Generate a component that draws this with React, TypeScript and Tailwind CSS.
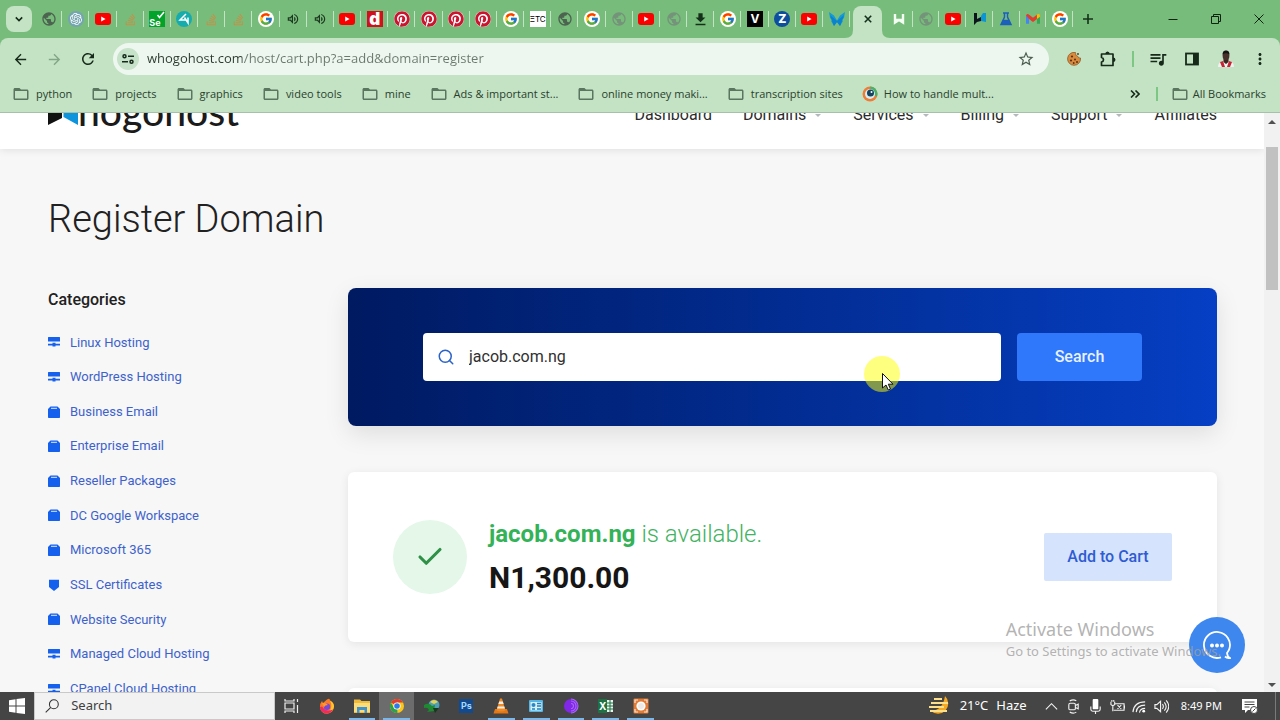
import type { ReactNode } from "react";
import { Check, Search } from "lucide-react";
import { FaPinterest, FaStackOverflow } from "react-icons/fa";
import { FcGoogle } from "react-icons/fc";
import {
  MdArrowBack,
  MdArrowForward,
  MdDownload,
  MdFolderOpen,
  MdMoreVert,
  MdOutlineVolumeUp,
  MdPublic,
  MdQueueMusic,
  MdRefresh,
  MdStarBorder,
} from "react-icons/md";
import { SiOpenai } from "react-icons/si";

const pinnedTabs = [
  "globe", "openai", "youtube", "stack", "selenium", "teal", "stack", "stack", "google", "sound",
  "sound", "youtube", "d", "pinterest", "pinterest", "pinterest", "pinterest", "google", "etc", "globe",
  "google", "globeMuted", "youtube", "globeMuted", "download", "google", "v", "z", "youtube", "wing",
];

const trailingTabs = ["w", "globeMuted", "youtube", "wDark", "flask", "gmail", "google"];

const bookmarks = [
  "python",
  "projects",
  "graphics",
  "video tools",
  "mine",
  "Ads & important st...",
  "online money maki...",
  "transcription sites",
];

const navLinks = [
  { label: "Dashboard", menu: false },
  { label: "Domains", menu: true },
  { label: "Services", menu: true },
  { label: "Billing", menu: true },
  { label: "Support", menu: true },
  { label: "Affiliates", menu: false },
];

const categories = [
  { label: "Linux Hosting", icon: "server" },
  { label: "WordPress Hosting", icon: "server" },
  { label: "Business Email", icon: "box" },
  { label: "Enterprise Email", icon: "box" },
  { label: "Reseller Packages", icon: "box" },
  { label: "DC Google Workspace", icon: "box" },
  { label: "Microsoft 365", icon: "box" },
  { label: "SSL Certificates", icon: "shield" },
  { label: "Website Security", icon: "box" },
  { label: "Managed Cloud Hosting", icon: "server" },
  { label: "CPanel Cloud Hosting", icon: "server" },
];

const favicons: Record<string, ReactNode> = {
  globe: <MdPublic className="size-4 text-[#4c6350]" />,
  globeMuted: <MdPublic className="size-4 text-[#74937a]" />,
  openai: (
    <span className="flex size-4 items-center justify-center rounded-full bg-[#74a5b0]">
      <SiOpenai className="size-3 text-white" />
    </span>
  ),
  youtube: (
    <svg viewBox="0 0 16 12" className="h-3 w-4">
      <rect width="16" height="12" rx="3" fill="#fb0000" />
      <path d="M6.2 3.5v5L10.6 6z" fill="#fff" />
    </svg>
  ),
  stack: <FaStackOverflow className="size-[13px] text-[#c0924a]" />,
  selenium: (
    <span className="relative flex size-4 items-end bg-[#02a32b] font-[Inter,sans-serif] text-[9px] leading-[9px] font-bold text-white">
      Se
      <svg viewBox="0 0 16 16" className="absolute inset-0">
        <path d="M8.5 4l2 2.5L15 1" fill="none" stroke="#fff" strokeWidth="1.6" />
      </svg>
    </span>
  ),
  teal: (
    <svg viewBox="0 0 16 16" className="size-4">
      <circle cx="8" cy="8" r="8" fill="#16acae" />
      <path d="M10 3L4 9h6M8.500 6.500L12 12V6.500" fill="none" stroke="#fff" strokeWidth="1.500" />
    </svg>
  ),
  google: (
    <span className="flex size-4 items-center justify-center rounded-full bg-white">
      <FcGoogle className="size-[14px]" />
    </span>
  ),
  sound: <MdOutlineVolumeUp className="size-[14px] text-[#1c3820]" />,
  d: (
    <span className="flex size-4 items-center justify-center bg-[#d40f1b] font-[Inter,sans-serif] text-[17px] leading-4 font-black text-white">
      d
    </span>
  ),
  pinterest: (
    <span className="rounded-full bg-white">
      <FaPinterest className="size-4 text-[#cb1430]" />
    </span>
  ),
  etc: (
    <span className="flex size-4 items-center justify-center bg-white font-[Inter,sans-serif] text-[8px] text-black">
      ΞTC
    </span>
  ),
  download: <MdDownload className="size-[17px] text-[#14301a]" />,
  v: (
    <span className="flex size-4 items-center justify-center bg-black font-[Inter,sans-serif] text-[12px] font-bold text-white">
      V
    </span>
  ),
  z: (
    <span className="flex size-4 items-center justify-center rounded-full bg-[#0d4e9e] font-[Inter,sans-serif] text-[12px] font-extrabold text-white">
      Z
    </span>
  ),
  wing: (
    <svg viewBox="0 0 16 16" className="size-4">
      <path d="M0 1l5 3.500 3 5 3-5L16 1l-1 6-2 2 1 1-3 5-3-4-3 4-3-5 1-1-2-2z" fill="#149bd7" />
      <path d="M1 4l7 6 7-6-2 6-2 5-3-4-3 4-2-5z" fill="#0b82cc" />
    </svg>
  ),
  w: (
    <svg viewBox="0 0 16 16" className="size-4">
      <path d="M4 3v8.500L8 9l4 2.500V3M4 9h8" fill="none" stroke="#f4fff4" strokeWidth="2.400" />
    </svg>
  ),
  wDark: (
    <svg viewBox="0 0 16 16" className="size-4">
      <path d="M2 2h3v6l4-2v4l-4 1-3 3z" fill="#0c151c" />
      <path d="M9 10V5l2-3h3v9z" fill="#0b95d5" />
    </svg>
  ),
  flask: (
    <svg viewBox="0 0 16 16" className="size-4" fill="none" stroke="#1d60bb" strokeWidth="1.500">
      <path d="M5 2h6M6.500 2v4L3 13.500h10L9.500 6V2" />
      <path d="M5.500 9.500h5l1.500 3.500H4z" fill="#1d60bb" />
    </svg>
  ),
  gmail: (
    <svg viewBox="0 0 16 12" className="h-3 w-[14px]">
      <path d="M0 2v9.500h3.500V5z" fill="#4285f4" />
      <path d="M16 2v9.500h-3.500V5z" fill="#34a853" />
      <path d="M0 2Q1.500-.8 3.500 1L8 4.500 12.500 1v5L8 9.500 3.500 6z" fill="#e33b2e" />
      <path d="M12.500 1Q15-.8 16 2v1.500L12.500 6z" fill="#fbbc04" />
    </svg>
  ),
};

function Tab({ icon }: { icon: string }) {
  return (
    <button type="button" aria-label={icon} className="relative flex h-full flex-1 items-center justify-center">
      {favicons[icon]}
      <span className="absolute top-[11px] right-0 h-4 w-px bg-[#c3e3c4]" />
    </button>
  );
}

function TabStrip() {
  return (
    <div className="flex h-[38px] items-center">
      <button type="button" aria-label="Search tabs" className="ml-[6px] flex size-[26px] items-center justify-center rounded-lg bg-[#c3e3c4]">
        <svg viewBox="0 0 10 10" className="size-2" fill="none" stroke="#162b19" strokeWidth="2">
          <path d="M1 3l4 4 4-4" />
        </svg>
      </button>
      <div className="ml-[3px] flex h-full w-[815px]">
        {pinnedTabs.map((icon, i) => (
          <Tab key={i} icon={icon} />
        ))}
      </div>
      <button type="button" aria-label="Close tab" className="relative ml-[3px] flex h-8 w-[29px] items-center justify-center self-end rounded-t-lg bg-[#c3e3c4] pb-[6px]">
        <svg viewBox="0 0 8 8" className="size-2" stroke="#14301a" strokeWidth="1.600">
          <path d="M.8.8l6.400 6.400M7.200.8L.8 7.200" />
        </svg>
        <svg viewBox="0 0 8 8" className="absolute bottom-0 -left-2 size-2" fill="#c3e3c4">
          <path d="M8 0v8H0q8 0 8-8z" />
        </svg>
        <svg viewBox="0 0 8 8" className="absolute -right-2 bottom-0 size-2" fill="#c3e3c4">
          <path d="M0 0v8h8q-8 0-8-8z" />
        </svg>
      </button>
      <div className="ml-[4px] flex h-full w-[187px]">
        {trailingTabs.map((icon, i) => (
          <Tab key={i} icon={icon} />
        ))}
      </div>
      <button type="button" aria-label="New tab" className="flex h-full w-[30px] items-center justify-center">
        <svg viewBox="0 0 10 10" className="size-[10px]" stroke="#14301a" strokeWidth="1.600">
          <path d="M5 0v10M0 5h10" />
        </svg>
      </button>
      <div className="ml-auto flex h-full">
        {["Minimize", "Restore", "Close"].map((label) => (
          <button key={label} type="button" aria-label={label} className="flex w-[43px] items-center justify-center">
            <svg viewBox="0 0 10 10" className="size-[10px]" fill="none" stroke="#0f2412">
              {label === "Minimize" && <path d="M.5 5.500h9" />}
              {label === "Restore" && <path d="M.5 2.500h7v7h-7zM2.500 2.500v-2h7v7h-2" />}
              {label === "Close" && <path d="M.5.5l9 9M9.500.5l-9 9" />}
            </svg>
          </button>
        ))}
      </div>
    </div>
  );
}

function ToolButton({ label, children }: { label: string; children: ReactNode }) {
  return (
    <button type="button" aria-label={label} className="flex h-8 w-[34px] shrink-0 items-center justify-center text-[#172a1a]">
      {children}
    </button>
  );
}

function Toolbar() {
  return (
    <div className="flex h-[42px] items-center rounded-t-lg bg-[#c3e3c4] px-[3px]">
      <ToolButton label="Back"><MdArrowBack className="size-[17px]" /></ToolButton>
      <ToolButton label="Forward"><MdArrowForward className="size-[17px] text-[#84a688]" /></ToolButton>
      <ToolButton label="Reload"><MdRefresh className="size-[18px]" /></ToolButton>
      <div className="mx-2 flex h-8 min-w-0 flex-1 items-center rounded-full bg-[#edf7ef] pr-[14px] pl-[4px]">
        <span className="flex size-[22px] items-center justify-center rounded-full bg-[#c6e2c8]">
          <svg viewBox="0 0 12 10" className="h-[10px] w-3" fill="none" stroke="#15291a" strokeWidth="1.500">
            <circle cx="2.500" cy="2.300" r="1.500" />
            <path d="M6 2.300h6M0 7.700h6" />
            <circle cx="9.500" cy="7.700" r="1.500" />
          </svg>
        </span>
        <input
          aria-label="Address"
          defaultValue="whogohost.com/host/cart.php?a=add&domain=register"
          className="ml-2 min-w-0 flex-1 bg-[linear-gradient(90deg,#2c3b2f_95px,#6a786d_95px)] bg-clip-text font-['Open_Sans',sans-serif] text-[13px] text-transparent outline-none"
        />
        <MdStarBorder className="size-[18px] text-[#4b5d4e]" />
      </div>
      <ToolButton label="Cookies">
        <svg viewBox="0 0 14 14" className="size-[14px]">
          <path d="M8.500.5A6.500 6.500 0 1 0 13.500 6q-2 .6-2.500-1.500Q8 4 8.500.5z" fill="#d98a3d" stroke="#83501f" strokeWidth=".7" />
          <g fill="#5a3013">
            <circle cx="5" cy="4.500" r="1.100" />
            <circle cx="4" cy="8.500" r="1.100" />
            <circle cx="8" cy="7.500" r="1" />
            <circle cx="10" cy="10" r="1" />
            <circle cx="6.700" cy="11" r=".9" />
            <circle cx="11" cy="2" r=".9" />
          </g>
        </svg>
      </ToolButton>
      <ToolButton label="Extensions">
        <svg viewBox="0 0 18 18" className="size-[18px]">
          <path
            d="M2.500 4h11.500v11.500H2.500v-3.500q2-.4 2-2.200t-2-2.300z"
            fill="none"
            stroke="#172a1a"
            strokeWidth="1.700"
            strokeLinejoin="round"
          />
          <path d="M6.300 4a2.200 2.500 0 0 1 4.400 0zM14 7.500a2.500 2.200 0 0 1 0 4.400z" fill="#172a1a" />
        </svg>
      </ToolButton>
      <span className="mx-[7px] h-4 w-[2px] bg-[#7cc783]" />
      <ToolButton label="Media"><MdQueueMusic className="size-5" /></ToolButton>
      <ToolButton label="Side panel">
        <svg viewBox="0 0 14 14" className="size-[14px]">
          <rect x="1" y="1.500" width="12" height="11" fill="none" stroke="#172a1a" strokeWidth="1.800" />
          <path d="M8 1h5v12H8z" fill="#172a1a" />
        </svg>
      </ToolButton>
      <ToolButton label="Profile">
        <svg viewBox="0 0 18 18" className="size-[18px]">
          <path d="M1 17q0-5 5-6l3 3 3-3q5 1 5 6z" fill="#eef3f0" />
          <path d="M3 12l3-1 2 6H5zM15 12l-3-1-2 6h3z" fill="#c92236" />
          <path d="M6.500 9h5v3L9 14l-2.500-2z" fill="#3a2420" />
          <ellipse cx="9" cy="5.500" rx="3.400" ry="4.700" fill="#49302a" />
          <path d="M5.600 4.500Q5.500.5 9 .5t3.400 4Q9 2 5.600 4.500z" fill="#171312" />
        </svg>
      </ToolButton>
      <ToolButton label="Menu"><MdMoreVert className="size-[18px]" /></ToolButton>
    </div>
  );
}

function BookmarksBar() {
  return (
    <nav className="flex h-[33px] items-center border-b border-[#a5c1a7] bg-[#c3e3c4] pr-[14px] pb-1 pl-3 font-['Open_Sans',sans-serif] text-[11px] whitespace-nowrap text-[#2a3f2d]">
      <div className="flex min-w-0 flex-1 gap-[19px]">
        {bookmarks.map((label) => (
          <a key={label} href="#" className="flex items-center gap-[6px]">
            <MdFolderOpen className="size-[18px] text-[#5b765f]" />
            {label}
          </a>
        ))}
        <a href="#" className="flex items-center gap-[6px]">
          <svg viewBox="0 0 16 16" className="size-4">
            <circle cx="8" cy="8" r="7.500" fill="#ed7d37" />
            <path d="M8 .5a7.500 7.500 0 0 1 7 10l-5-2z" fill="#48b26b" />
            <circle cx="8" cy="8" r="5" fill="#d7eef3" />
            <circle cx="8.500" cy="7" r="3.500" fill="#17435f" />
            <circle cx="9.500" cy="6" r="1" fill="#fff" />
          </svg>
          How to handle mult...
        </a>
      </div>
      <button type="button" aria-label="More bookmarks">
        <svg viewBox="0 0 10 8" className="h-2 w-[10px]" fill="none" stroke="#172a1a" strokeWidth="1.600">
          <path d="M1 .5L4.500 4 1 7.500M5.500.5L9 4 5.500 7.500" />
        </svg>
      </button>
      <span className="mr-[13px] ml-4 h-[14px] w-[2px] bg-[#7cc783]" />
      <a href="#" className="flex items-center gap-1">
        <MdFolderOpen className="size-[18px] text-[#5b765f]" />
        All Bookmarks
      </a>
    </nav>
  );
}

function CategoryIcon({ icon }: { icon: string }) {
  return (
    <svg viewBox="0 0 12 12" className="size-3 shrink-0" fill="#1660ee">
      {icon === "server" && <path d="M.5 1h11q.5 0 .5.500V5.500H0v-4Q0 1 .5 1zM4.500 6.800h3v.9H12v1.800H7.500v1h-3v-1H0V7.700h4.500z" />}
      {icon === "box" && (
        <>
          <path d="M2.500.5h7L12 3v8.300q0 .7-.7.700H.7q-.7 0-.7-.7V3z" />
          <path d="M3 2.300h6" stroke="#dce8fb" strokeWidth="1" />
        </>
      )}
      {icon === "shield" && <path d="M1 .7h10V8L6 12 1 8z" />}
    </svg>
  );
}

function SiteHeader() {
  return (
    <header className="relative -mt-8 flex h-[68px] items-center justify-between bg-white pr-[47px] pl-12 shadow-[0_1px_8px_rgba(0,0,0,0.10)]">
      <a href="#" aria-label="Whogohost" className="flex items-center pb-2">
        <svg viewBox="0 0 30 36" className="h-9 w-[30px]">
          <path d="M0 4v28l14-7V11z" fill="#111" />
          <path d="M15.500 11v13L30 32V4z" fill="#0d94dc" />
        </svg>
        <span className="font-[Lato,sans-serif] text-[39px] leading-10 font-medium text-[#1b1b1b]">hogohost</span>
      </a>
      <nav className="flex items-center gap-[31px]">
        {navLinks.map((link) => (
          <a key={link.label} href="#" className="flex items-center gap-2 text-[16px] leading-6 text-[#2b2b2b]">
            {link.label}
            {link.menu && (
              <svg viewBox="0 0 8 5" className="h-[5px] w-2" fill="#b5b8bb">
                <path d="M1 1h6L4 4z" />
              </svg>
            )}
          </a>
        ))}
      </nav>
    </header>
  );
}

function DomainPage() {
  return (
    <div className="min-w-0 flex-1 overflow-hidden bg-[#f7f7f7] font-[Roboto,sans-serif]">
      <SiteHeader />
      <main className="pt-[46px] pr-[47px] pl-12">
        <h1 className="text-[38px] leading-[48px] font-light text-[#212121]">Register Domain</h1>
        <div className="mt-[45px] flex">
          <aside className="w-[300px] shrink-0">
            <h2 className="text-[16px] leading-6 font-medium text-[#212121]">Categories</h2>
            <ul className="mt-[13px] grid h-[381px] auto-rows-fr">
              {categories.map((category) => (
                <li key={category.label} className="flex items-center">
                  <a href="#" className="flex items-center gap-[10px] text-[13px] text-[#3d62cc]">
                    <CategoryIcon icon={category.icon} />
                    {category.label}
                  </a>
                </li>
              ))}
            </ul>
          </aside>

          <div className="min-w-0 flex-1 space-y-[46px]">
            <form
              onSubmit={(e) => e.preventDefault()}
              className="flex gap-4 rounded-lg bg-linear-to-r from-[#001a61] to-[#063fc4] px-[75px] py-[45px] shadow-[0_8px_24px_rgba(0,0,0,0.10)]"
            >
              <label className="flex h-12 min-w-0 flex-1 items-center gap-[14px] rounded-sm bg-white px-[14px]">
                <Search className="size-[18px] shrink-0 text-[#2a63c9]" />
                <input
                  type="text"
                  aria-label="Domain name"
                  defaultValue="jacob.com.ng"
                  className="min-w-0 flex-1 text-[16px] text-[#303030] outline-none"
                />
              </label>
              <button type="submit" className="h-12 w-[125px] rounded-sm bg-[#2f77fb] text-[16px] font-medium text-[#e9f2ff]">
                Search
              </button>
            </form>

            <section className="flex items-center rounded-md bg-white px-[45px] py-10 shadow-[0_2px_10px_rgba(0,0,0,0.08)]">
              <span className="flex size-[74px] shrink-0 items-center justify-center rounded-full bg-[#e4f7e9]">
                <Check className="size-[30px] text-[#2f9147]" strokeWidth={2.5} />
              </span>
              <div className="ml-[22px] min-w-0 flex-1 pb-[2px]">
                <p className="text-[24px] leading-[44px] font-light text-[#43b35f]">
                  <strong className="font-bold text-[#34b257]">jacob.com.ng</strong> is available.
                </p>
                <p className="text-[30px] leading-[44px] font-bold text-[#161616]">N1,300.00</p>
              </div>
              <button type="button" className="h-12 w-32 rounded-xs bg-[#d5e3fd] text-[16px] font-medium text-[#2f5bd3]">
                Add to Cart
              </button>
            </section>

            <section className="h-20 rounded-md bg-white shadow-[0_2px_10px_rgba(0,0,0,0.08)]" />
          </div>
        </div>
      </main>
    </div>
  );
}

function Scrollbar() {
  return (
    <div className="flex w-4 flex-col items-center justify-between bg-[#f1f1f1] pt-[7px] pb-[5px]">
      <svg viewBox="0 0 8 4" className="h-1 w-2" fill="#505050"><path d="M4 0l4 4H0z" /></svg>
      <div className="mt-[23px] h-[143px] w-3 bg-[#c1c1c1]" />
      <svg viewBox="0 0 8 4" className="mt-auto h-1 w-2" fill="#505050"><path d="M4 4L0 0h8z" /></svg>
    </div>
  );
}

const taskIcons: { name: string; open: boolean; art: ReactNode }[] = [
  {
    name: "Task view",
    open: false,
    art: <path d="M1 1v2h9V1M1 15v-2h9v2M1 5h9v6H1zM13.500 1v3M13.500 7v8" fill="none" stroke="#eee" strokeWidth="1.200" />,
  },
  {
    name: "Firefox",
    open: false,
    art: (
      <>
        <path d="M8 1.500q3-2 3 1 4 2 4 6A7 7 0 0 1 1 9q0-4 2-6l1 2q2-2 4-3.500z" fill="#ff7a22" />
        <path d="M11 2.500q4 2 4 6-1 5-5 6 4-6 1-12z" fill="#ffc62e" />
        <path d="M1 9q0 5 6 6.500 5 0 7-4-7 3-11-3z" fill="#ee2b63" />
        <circle cx="8" cy="8.700" r="3.200" fill="#7848d6" />
        <path d="M3 5q4-.5 6 2-3 0-4 2z" fill="#ff9b2d" />
      </>
    ),
  },
  {
    name: "File Explorer",
    open: true,
    art: (
      <>
        <path d="M0 1.500h6l1.500 1.500H16v12H0z" fill="#efbb3c" />
        <path d="M0 5h16v9H0z" fill="#fbdc77" />
        <path d="M3 9h10v6h-2.500v-3h-5v3H3z" fill="#3e92cf" />
      </>
    ),
  },
  {
    name: "Chrome",
    open: true,
    art: (
      <>
        <circle cx="8" cy="8" r="7" fill="#fbc618" />
        <path d="M8 8L1.900 4.500A7 7 0 0 1 14.100 4.500H8z" fill="#e43c2e" />
        <path d="M8 8l.5 7A7 7 0 0 1 1.900 4.500L5 10z" fill="#2da24c" />
        <circle cx="8" cy="8" r="3.600" fill="#fff" />
        <circle cx="8" cy="8" r="2.800" fill="#2d7bea" />
      </>
    ),
  },
  {
    name: "Download Manager",
    open: false,
    art: (
      <>
        <circle cx="10" cy="7" r="5.500" fill="#4f9fb6" />
        <path d="M6 4q4-4 8 0l-4 2z" fill="#e6d355" />
        <path d="M0 7q5-3 8 1l3-1-1 6-7 1 2-2q-1-3-5-2z" fill="#1d8a32" />
        <path d="M9 10h6l-4 5z" fill="#16391e" />
      </>
    ),
  },
  { name: "Photoshop", open: false, art: null },
  {
    name: "VLC",
    open: true,
    art: (
      <>
        <path d="M2 11h12l1.500 4.500H.5z" fill="#e57713" />
        <path d="M7 .5h2l3.500 12q-4.500 2-9 0z" fill="#f08a24" />
        <path d="M6.200 3.500h3.600l.8 2.500H5.400zM4.700 8.500h6.600l.6 2H4z" fill="#f5efe8" />
      </>
    ),
  },
  {
    name: "Control Panel",
    open: true,
    art: (
      <>
        <rect x="1" y="2" width="14" height="12" rx="1" fill="#56b6e6" />
        <path d="M2.500 4h11v8.500h-11z" fill="#d7f0fb" />
        <circle cx="5.500" cy="7" r="2" fill="#2889c4" />
        <path d="M9 5.500h4M9 8h4M4 11h3M9 11h4" stroke="#2380b5" strokeWidth="1.400" />
      </>
    ),
  },
  {
    name: "Tor Browser",
    open: true,
    art: (
      <>
        <circle cx="8" cy="8" r="7" fill="#8127e8" />
        <path d="M8 3a5 5 0 0 1 0 10M8 5.500a2.500 2.500 0 0 1 0 5M8 1a7 7 0 0 1 0 14" fill="none" stroke="#a767f3" strokeWidth="1.100" />
      </>
    ),
  },
  { name: "Excel", open: true, art: null },
  {
    name: "Screen Recorder",
    open: true,
    art: (
      <>
        <rect x=".5" y=".5" width="15" height="15" rx="1" fill="#e17b36" />
        <path d="M2 5V2h3M11 2h3v3M14 11v3h-3M5 14H2v-3" fill="none" stroke="#fae4d3" strokeWidth="1.200" />
        <circle cx="8" cy="8" r="4.600" fill="#fff" />
        <circle cx="8" cy="8" r="3" fill="#efe9e5" />
      </>
    ),
  },
];

function TaskIcon({ name, art }: { name: string; art: ReactNode }) {
  if (name === "Photoshop") {
    return (
      <span className="flex size-[14px] items-center justify-center bg-[#134a8e] font-[Inter,sans-serif] text-[9px] font-bold text-[#a5d8ff]">
        Ps
      </span>
    );
  }
  if (name === "Excel") {
    return (
      <span className="flex h-[14px] items-center font-[Inter,sans-serif] text-[10px] leading-[14px] font-bold text-white">
        <span className="bg-[#1d7143] px-px">X</span>
        <svg viewBox="0 0 6 12" className="h-3 w-[6px]">
          <path d="M0 0h6v12H0z" fill="#e8f5ec" />
          <path d="M0 3h6M0 6h6M0 9h6M3 0v12" stroke="#1d7143" />
        </svg>
      </span>
    );
  }
  return <svg viewBox="0 0 16 16" className="size-4">{art}</svg>;
}

function TrayIcon({ label, children }: { label: string; children: ReactNode }) {
  return (
    <button type="button" aria-label={label} className="flex w-[22px] items-center justify-center">
      <svg viewBox="0 0 16 16" className="size-[15px]" fill="none" stroke="#f2f2f2" strokeWidth="1.200">
        {children}
      </svg>
    </button>
  );
}

function Taskbar() {
  return (
    <footer className="flex h-7 shrink-0 items-stretch bg-[#454545] font-['Noto_Sans',sans-serif] text-white">
      <button type="button" aria-label="Start" className="flex w-[34px] items-center justify-center">
        <svg viewBox="0 0 16 16" className="size-4" fill="#fff">
          <path d="M0 2.200L6.500 1.300v6.200H0zM7.500 1.100L16 0v7.500H7.500zM0 8.500h6.500v6.200L0 13.800zM7.500 8.500H16V16l-8.500-1.100z" />
        </svg>
      </button>
      <label className="flex w-[241px] items-center gap-3 border border-[#c9c9c9] bg-[#f2f2f2] pl-[10px]">
        <svg viewBox="0 0 16 16" className="size-4" fill="none" stroke="#333" strokeWidth="1.200">
          <circle cx="10" cy="6" r="5" />
          <path d="M6.500 9.500L.8 15.200" />
        </svg>
        <input type="search" aria-label="Search" placeholder="Search" className="w-full min-w-0 text-[13px] outline-none placeholder:text-[#404040]" />
      </label>
      <div className="flex w-[383px]">
        {taskIcons.map((item) => (
          <button
            key={item.name}
            type="button"
            aria-label={item.name}
            className={item.name === "Chrome" ? "relative flex flex-1 items-center justify-center bg-[#6c6c6c]" : "relative flex flex-1 items-center justify-center"}
          >
            <TaskIcon name={item.name} art={item.art} />
            {item.open && <span className="absolute inset-x-1 bottom-0 h-[2px] bg-[#76b9ed]" />}
          </button>
        ))}
      </div>
      <div className="ml-auto flex items-stretch text-[13px]">
        <button type="button" className="flex items-center gap-2 pr-[14px]">
          <svg viewBox="0 0 24 22" className="h-[22px] w-6">
            <path d="M17 1a10 10 0 1 1-14 15q12-1 14-15z" fill="#f6a823" />
            <path d="M6 4h8M3 8h17M1 12h15M2 16h17" stroke="#ffe08a" strokeWidth="1.800" />
          </svg>
          <span>21°C</span>
          <span>Haze</span>
        </button>
        <TrayIcon label="Hidden icons"><path d="M2 11l6-6 6 6" /></TrayIcon>
        <TrayIcon label="Meet now">
          <rect x="3" y="4.500" width="7" height="7" rx="1.500" />
          <path d="M10 7l3-1.500v5L10 9M4 2q4-2 7 0M4 14q4 2 7 0" />
        </TrayIcon>
        <TrayIcon label="Microphone">
          <rect x="5" y="0" width="6" height="11" rx="1" fill="#fff" stroke="none" />
          <path d="M3 8v3q0 2 2 2h6q2 0 2-2V8M8 13v3" />
        </TrayIcon>
        <TrayIcon label="Battery">
          <path d="M5 5h10v7H4M16 7v3M8 6.500l4 4M12 6.500l-4 4M1 3v3q2 2 4 0V3M2 1v2M4 1v2M3 7v6" />
        </TrayIcon>
        <TrayIcon label="Network">
          <path d="M1 14Q2 3 14 3M4.500 14Q5 6.500 14 6.500M8 14.500Q8.500 10 14 10" />
          <circle cx="12.500" cy="13" r="1.500" fill="#fff" stroke="none" />
        </TrayIcon>
        <TrayIcon label="Volume">
          <path d="M1 6h2l4-3.500v11L3 10H1zM9 5.500q2 2.500 0 5M11 3.500q4 4.500 0 9M13 1.500q5.500 6.500 0 13" />
        </TrayIcon>
        <span className="ml-2 flex items-center text-[11px]">8:49 PM</span>
        <button type="button" aria-label="Notifications" className="mr-[17px] ml-[19px] flex items-center">
          <svg viewBox="0 0 17 16" className="h-4 w-[17px]">
            <path d="M1 1h15v11H7l-3 3v-3H1z" fill="#fff" />
            <path d="M3.500 4h10M3.500 6.500h10M3.500 9h5" stroke="#454545" />
            <circle cx="13" cy="12" r="3.500" fill="#fff" stroke="#454545" />
            <path d="M11.500 13.500l3-3" stroke="#454545" />
          </svg>
        </button>
        <span className="mr-1 w-px bg-[#7a7a7a]" />
      </div>
    </footer>
  );
}

export default function App() {
  return (
    <div className="relative flex h-screen flex-col overflow-hidden">
      <div className="shrink-0 bg-[#78bc7b]">
        <TabStrip />
        <Toolbar />
        <BookmarksBar />
      </div>

      <div className="flex min-h-0 flex-1">
        <DomainPage />
        <Scrollbar />
      </div>
      <Taskbar />

      <button type="button" aria-label="Open chat" className="absolute right-[35px] bottom-[47px] flex size-14 items-center justify-center rounded-full bg-[#3d87ee]">
        <svg viewBox="0 0 28 28" className="size-7" fill="none" stroke="#fff" strokeWidth="1.800">
          <path d="M18 26.300A13 13 0 1 1 26.300 18q-.6 2-2.300 4 .5 4 3 5-3 .5-5-1.500" />
          <g fill="#fff" stroke="none">
            <circle cx="9" cy="14.500" r="2" />
            <circle cx="14" cy="14.500" r="2" />
            <circle cx="19" cy="14.500" r="2" />
          </g>
        </svg>
      </button>

      <div className="pointer-events-none absolute right-[59px] bottom-[59px] font-['Noto_Sans',sans-serif] text-[#a0a0a0]/80">
        <p className="text-[18px] leading-6">Activate Windows</p>
        <p className="text-[13px] leading-5">Go to Settings to activate Windows.</p>
      </div>

      <div className="pointer-events-none absolute top-[356px] left-[864px] size-9 rounded-full bg-[#ffff00]/50">
        <svg viewBox="0 0 12 18" className="absolute top-[17px] left-[18px] h-[18px] w-3">
          <path d="M.5.5v14.500L4 12l2.300 5 2.200-1-2.200-4.800H11z" fill="#fff" stroke="#111" strokeWidth="1" />
        </svg>
      </div>
    </div>
  );
}
